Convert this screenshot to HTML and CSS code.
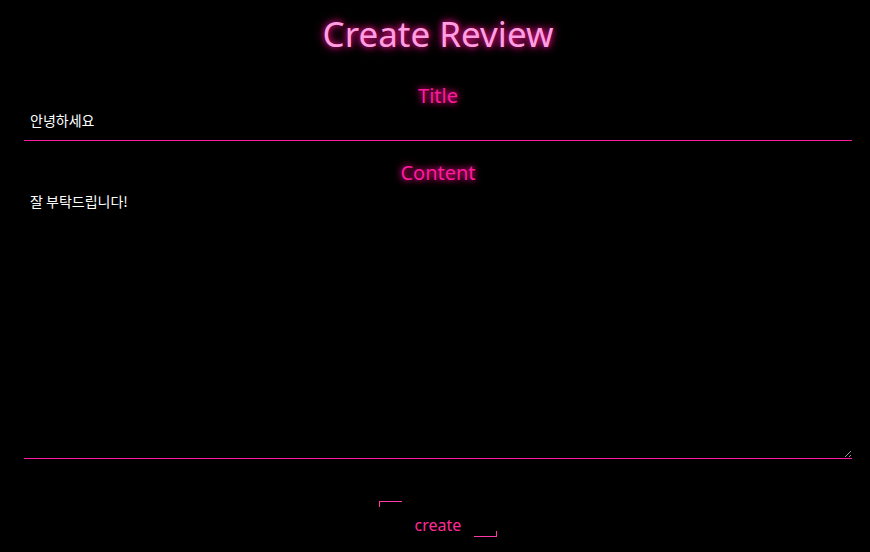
FILE: index.html
```html
<html>
<head>
    <link rel="stylesheet" href="styles.css">
</head>

<body>
    <div class="page">
        <h1 class="page-title">Create Review</h1>

        <form class="review-form" onsubmit="return false;">
            <label class="field-label" for="reviewTitle">Title</label>
            <input class="field-input" type="text" id="reviewTitle" value="안녕하세요" />

            <label class="field-label content-label" for="reviewContent">Content</label>
            <textarea class="field-area" id="reviewContent">잘 부탁드립니다!</textarea>

            <div class="actions">
                <button class="create-btn" type="submit">create</button>
            </div>
        </form>
    </div>
</body>
</html>
```

FILE: styles.css
```css
body {
    margin: 0;
    background-color: #000;
    font-family: "Noto Sans", "Open Sans", "Noto Sans CJK KR", sans-serif;
}

.page {
    padding: 12px 18px 0 24px;
}

.page-title {
    margin: 0;
    font-size: 35px;
    line-height: 44px;
    font-weight: 400;
    text-align: center;
    color: #ff9fe2;
    text-shadow: 0 0 6px #ff1493, 0 0 12px rgba(255, 20, 147, 0.6);
}

.review-form {
    display: flex;
    flex-direction: column;
}

.field-label {
    margin-top: 27px;
    font-size: 20px;
    line-height: 26px;
    text-align: center;
    color: #ff1a9c;
    text-shadow: 0 0 6px #ff1493, 0 0 10px rgba(255, 20, 147, 0.5);
}

.content-label {
    margin-top: 19px;
}

.field-input,
.field-area {
    display: block;
    width: 100%;
    box-sizing: border-box;
    background: transparent;
    border: none;
    border-bottom: 1px solid #ff1ba0;
    color: #fff;
    font-family: "Noto Sans CJK KR", "Noto Sans", sans-serif;
    font-size: 14px;
    line-height: 17px;
    outline: none;
}

.field-input {
    height: 32px;
    padding: 3px 6px 12px;
}

.field-area {
    height: 273px;
    padding: 7px 6px 6px;
    resize: vertical;
}

.actions {
    display: flex;
    justify-content: center;
    margin-top: 42px;
}

.create-btn {
    position: relative;
    width: 118px;
    height: 36px;
    padding: 11px 0 0;
    background: transparent;
    border: none;
    color: #ff2a98;
    font-family: "Noto Sans", sans-serif;
    font-size: 16px;
    cursor: pointer;
}

.create-btn::before,
.create-btn::after {
    content: "";
    position: absolute;
    width: 22px;
    height: 5px;
}

.create-btn::before {
    top: 0;
    left: 0;
    border-top: 1px solid #ff3aa6;
    border-left: 1px solid #ff3aa6;
}

.create-btn::after {
    bottom: 0;
    right: 0;
    border-bottom: 1px solid #ff3aa6;
    border-right: 1px solid #ff3aa6;
}
```
